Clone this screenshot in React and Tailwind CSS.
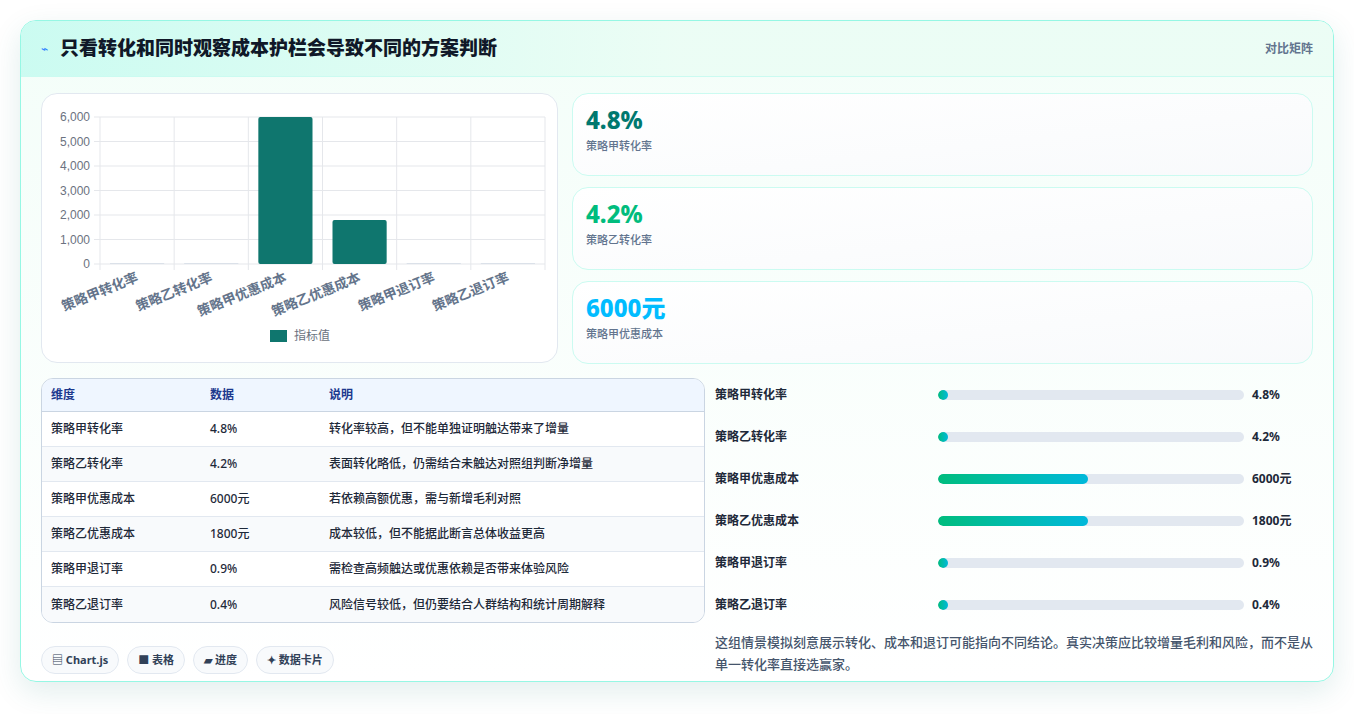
import React from "react";

const FONT = { fontFamily: '"Noto Sans", "Noto Sans CJK SC", sans-serif' };

const rows = [
  ["策略甲转化率", "4.8%", "转化率较高，但不能单独证明触达带来了增量"],
  ["策略乙转化率", "4.2%", "表面转化略低，仍需结合未触达对照组判断净增量"],
  ["策略甲优惠成本", "6000元", "若依赖高额优惠，需与新增毛利对照"],
  ["策略乙优惠成本", "1800元", "成本较低，但不能据此断言总体收益更高"],
  ["策略甲退订率", "0.9%", "需检查高频触达或优惠依赖是否带来体验风险"],
  ["策略乙退订率", "0.4%", "风险信号较低，但仍要结合人群结构和统计周期解释"],
];

const progress = [
  ["策略甲转化率", "4.8%", 0],
  ["策略乙转化率", "4.2%", 0],
  ["策略甲优惠成本", "6000元", 49],
  ["策略乙优惠成本", "1800元", 49],
  ["策略甲退订率", "0.9%", 0],
  ["策略乙退订率", "0.4%", 0],
];

const values = [4.8, 4.2, 6000, 1800, 0.9, 0.4];

function Chart() {
  const x0 = 58, x1 = 503, yTop = 23, yBot = 170;
  const step = (x1 - x0) / 6;
  const h = (v) => ((yBot - yTop) * v) / 6000;
  return (
    <svg width="516" height="269" className="block">
      {[0, 1, 2, 3, 4, 5, 6].map((i) => {
        const y = yBot - ((yBot - yTop) * i) / 6;
        return (
          <g key={i}>
            <line x1={x0 - 6} x2={x1} y1={y} y2={y} stroke="#e5e7eb" />
            <text x={x0 - 10} y={y + 4} textAnchor="end" fontSize="12" fill="#6b7280" fontFamily="Liberation Sans, sans-serif">
              {i === 0 ? "0" : `${i},000`}
            </text>
          </g>
        );
      })}
      {[0, 1, 2, 3, 4, 5, 6].map((i) => (
        <line key={i} x1={x0 + step * i} x2={x0 + step * i} y1={yTop} y2={yBot + 6} stroke="#e5e7eb" />
      ))}
      {values.map((v, i) => {
        const bh = Math.max(h(v), 1);
        return (
          <rect key={i} x={x0 + step * i + 10} y={yBot - bh} width={step - 20} height={bh} rx={v > 100 ? 2 : 0} fill={v > 100 ? "#0f766e" : "#cbd5e1"} opacity={v > 100 ? 1 : 0.6} />
        );
      })}
      {rows.map((r, i) => {
        const ax = x0 + step * i + step / 2 + 2;
        const ay = yBot + 17;
        return (
          <text key={i} x={ax} y={ay} textAnchor="end" fontSize="13.5" fontWeight="600" fill="#64748b" transform={`rotate(-22 ${ax} ${ay})`} style={FONT}>
            {r[0]}
          </text>
        );
      })}
      <rect x="228" y="236" width="17" height="12" fill="#0f766e" />
      <text x="252" y="246" fontSize="12" fill="#6b7280" style={FONT}>指标值</text>
    </svg>
  );
}

export default function App() {
  return (
    <div className="min-h-screen bg-white p-5" style={FONT}>
      <div className="rounded-2xl border border-teal-200 bg-gradient-to-b from-emerald-50/60 to-white shadow-[0_10px_30px_rgba(15,118,110,0.12)] overflow-hidden">
        <div className="h-14 flex items-center justify-between px-5 border-b border-teal-100 bg-gradient-to-r from-teal-100 via-emerald-50 to-emerald-50">
          <div className="flex items-center gap-3">
            <span className="text-blue-500 text-xs">⌁</span>
            <h1 className="text-[19px] font-extrabold text-gray-900">只看转化和同时观察成本护栏会导致不同的方案判断</h1>
          </div>
          <span className="text-xs font-semibold text-slate-500">对比矩阵</span>
        </div>
        <div className="px-5 pt-4 pb-[6px]">
          <div className="grid grid-cols-[517px_1fr] gap-[14px]">
            <div className="h-[270px] rounded-2xl border border-slate-200 bg-white">
              <Chart />
            </div>
            <div className="flex flex-col gap-[11px]">
              {[
                ["4.8%", "策略甲转化率", "text-teal-700"],
                ["4.2%", "策略乙转化率", "text-emerald-500"],
                ["6000元", "策略甲优惠成本", "text-sky-400"],
              ].map(([v, l, c]) => (
                <div key={l} className="h-[83px] rounded-2xl border border-teal-100 bg-gradient-to-br from-white to-slate-50 px-[13px] pt-[10px]">
                  <div className={`text-2xl font-extrabold ${c}`}>{v}</div>
                  <div className="text-[11px] font-medium text-slate-500 mt-0.5">{l}</div>
                </div>
              ))}
            </div>
          </div>
          <div className="grid grid-cols-[664px_1fr] gap-[10px] mt-[14px]">
            <div>
              <div className="rounded-xl border border-slate-300 overflow-hidden bg-white">
                <div className="grid grid-cols-[159px_119px_1fr] h-[33px] items-center px-[9px] bg-blue-50 text-xs font-bold text-blue-900 border-b border-slate-300">
                  <span>维度</span><span>数据</span><span>说明</span>
                </div>
                {rows.map((r, i) => (
                  <div key={i} className={`grid grid-cols-[159px_119px_1fr] h-[35px] items-center px-[9px] text-xs font-medium text-gray-800 ${i < 5 ? "border-b border-slate-200" : ""} ${i % 2 ? "bg-slate-50" : "bg-white"}`}>
                    <span>{r[0]}</span><span>{r[1]}</span><span>{r[2]}</span>
                  </div>
                ))}
              </div>
              <div className="flex gap-2 mt-[23px]">
                {["▤ Chart.js", "■ 表格", "▰ 进度", "✦ 数据卡片"].map((c) => (
                  <span key={c} className="h-[28px] px-2.5 flex items-center rounded-full border border-slate-200 bg-slate-50 text-[11px] font-bold text-slate-700">{c}</span>
                ))}
              </div>
            </div>
            <div className="-mt-[4px]">
              <div className="flex flex-col">
                {progress.map(([l, v, p]) => (
                  <div key={l} className="h-[42px] flex items-center">
                    <span className="w-[223px] text-xs font-semibold text-gray-800">{l}</span>
                    <div className="w-[306px] h-[10px] rounded-full bg-slate-200 overflow-hidden">
                      <div className="h-full rounded-full bg-gradient-to-r from-emerald-500 to-cyan-500" style={{ width: p ? `${p}%` : "10px" }} />
                    </div>
                    <span className="ml-2 text-xs font-bold text-gray-800">{v}</span>
                  </div>
                ))}
              </div>
              <p className="mt-[5px] text-[13px] leading-[22px] font-medium text-slate-600">
                这组情景模拟刻意展示转化、成本和退订可能指向不同结论。真实决策应比较增量毛利和风险，而不是从单一转化率直接选赢家。
              </p>
            </div>
          </div>
        </div>
      </div>
    </div>
  );
}
